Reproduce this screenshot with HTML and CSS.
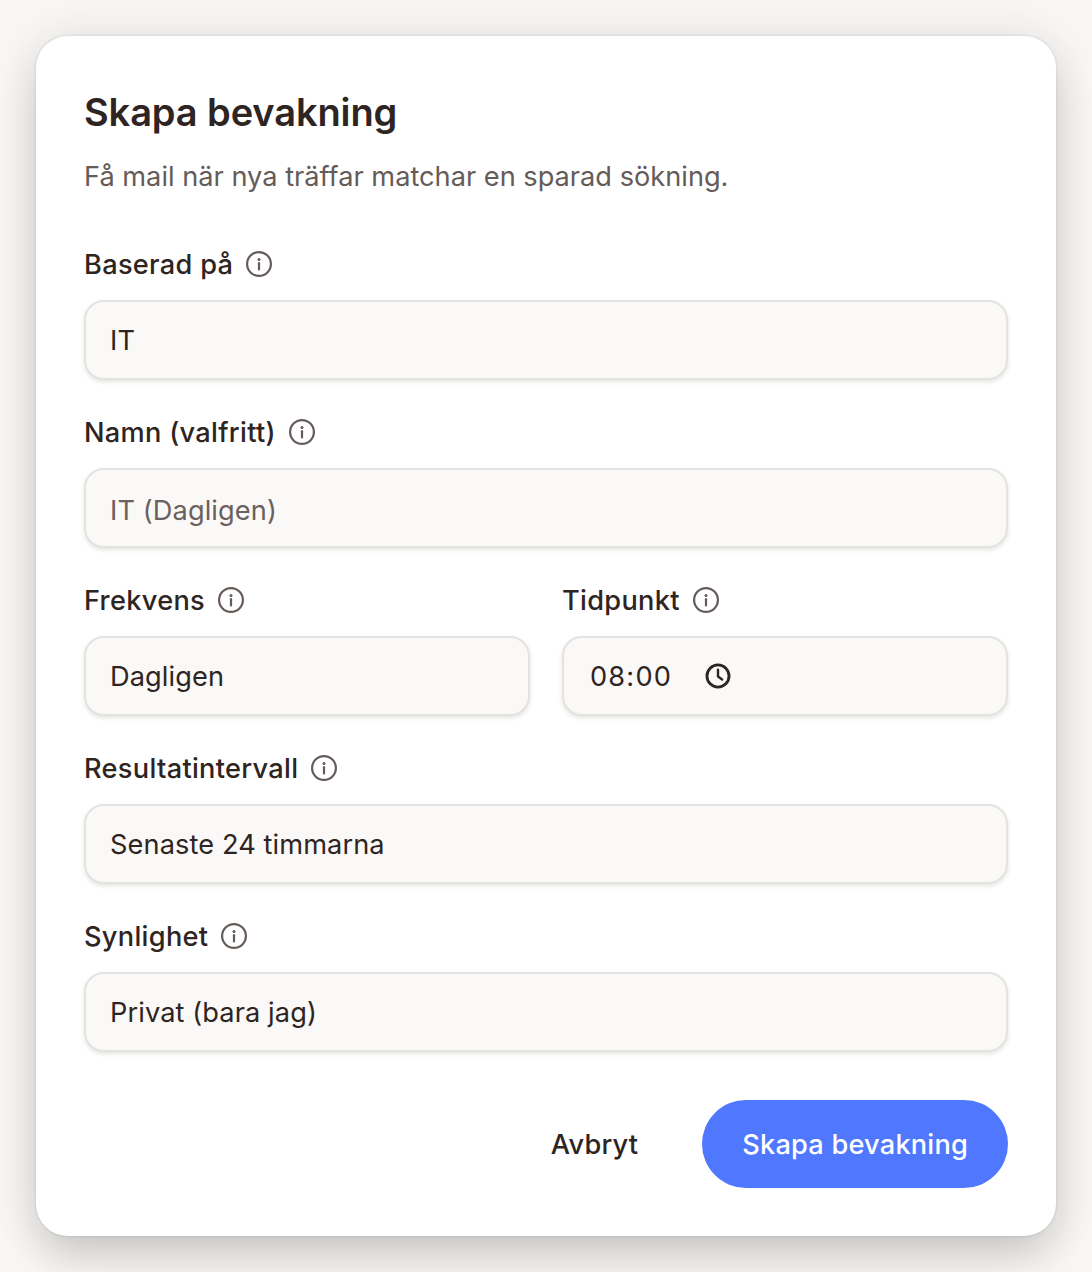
FILE: index.html
```html
<!DOCTYPE html>
<html lang="sv">
<head>
<meta charset="utf-8">
<title>Skapa bevakning</title>
<link rel="stylesheet" href="styles.css">
</head>
<body>
<svg class="defs" width="0" height="0" aria-hidden="true">
  <symbol id="info" viewBox="0 0 26 26">
    <circle cx="13" cy="13" r="11.9" fill="none" stroke="currentColor" stroke-width="2.2"/>
    <circle cx="13" cy="8.4" r="1.5" fill="currentColor"/>
    <path d="M13 12.2v6.2" fill="none" stroke="currentColor" stroke-width="2.2" stroke-linecap="round"/>
  </symbol>
</svg>
<main class="card">
  <h1 class="title">Skapa bevakning</h1>
  <p class="subtitle">Få mail när nya träffar matchar en sparad sökning.</p>
  <div class="field">
    <div class="label">Baserad på <svg class="info"><use href="#info"/></svg></div>
    <div class="input">IT</div>
  </div>
  <div class="field">
    <div class="label">Namn (valfritt) <svg class="info"><use href="#info"/></svg></div>
    <div class="input placeholder">IT (Dagligen)</div>
  </div>
  <div class="row">
    <div class="field">
      <div class="label">Frekvens <svg class="info"><use href="#info"/></svg></div>
      <div class="input">Dagligen</div>
    </div>
    <div class="field">
      <div class="label">Tidpunkt <svg class="info"><use href="#info"/></svg></div>
      <div class="input time">08:00
        <svg class="clock" viewBox="0 0 24 24"><circle cx="12" cy="12" r="10.2" fill="none" stroke="currentColor" stroke-width="2.6"/><path d="M12 6.2V12.4l3.8 2.8" fill="none" stroke="currentColor" stroke-width="2.2" stroke-linecap="round" stroke-linejoin="round"/></svg>
      </div>
    </div>
  </div>
  <div class="field">
    <div class="label">Resultatintervall <svg class="info"><use href="#info"/></svg></div>
    <div class="input">Senaste 24 timmarna</div>
  </div>
  <div class="field">
    <div class="label">Synlighet <svg class="info"><use href="#info"/></svg></div>
    <div class="input">Privat (bara jag)</div>
  </div>
  <div class="actions">
    <button class="btn-text" type="button">Avbryt</button>
    <button class="btn-primary" type="button">Skapa bevakning</button>
  </div>
</main>
</body>
</html>
```
FILE: styles.css
```css
* { box-sizing: border-box; }
html, body { margin: 0; height: 1272px; overflow: hidden; }
body {
  background: #f8f7f6;
  font-family: Inter, "Liberation Sans", sans-serif;
  color: #2e2422;
  padding: 36px;
}
.defs { position: absolute; }
.card {
  width: 1020px;
  height: 1200px;
  background: #fff;
  border-radius: 32px;
  padding: 52px 48px 48px;
  box-shadow: 0 0 0 1.5px rgba(40, 30, 25, .05), 0 24px 44px -6px rgba(40, 35, 30, .2), 0 0 48px rgba(40, 35, 30, .1);
}
.title {
  margin: 0;
  font-size: 38px;
  line-height: 48px;
  font-weight: 600;
  letter-spacing: -0.1px;
}
.subtitle {
  margin: 21px 0 0;
  font-size: 27.2px;
  line-height: 40px;
  color: #655b58;
}
.field { margin-top: 32px; flex: 1; min-width: 0; }
.subtitle + .field { margin-top: 47px; }
.row { display: flex; gap: 32px; }
.label {
  display: flex;
  align-items: center;
  gap: 13px;
  height: 40px;
  margin-bottom: 16px;
  font-size: 27.2px;
  font-weight: 450;
  letter-spacing: 0.3px;
}
.info { width: 26px; height: 26px; color: #655b58; flex: none; }
.input {
  display: flex;
  align-items: center;
  height: 80px;
  padding: 0 24px;
  background: #faf9f7;
  border: 2px solid #e5e3e0;
  border-radius: 20px;
  box-shadow: 0 2px 4px rgba(40, 30, 25, .12);
  font-size: 27.2px;
  letter-spacing: 0.1px;
}
.placeholder { color: #6a605d; padding-top: 4px; }
.time { letter-spacing: 1.2px; gap: 33px; padding-left: 26px; }
.clock { width: 26px; height: 26px; color: #2e2422; flex: none; }
.actions {
  display: flex;
  justify-content: flex-end;
  align-items: center;
  gap: 24px;
  margin-top: 48px;
}
.btn-text, .btn-primary {
  font: inherit;
  font-size: 27.2px;
  font-weight: 450;
  letter-spacing: 0.2px;
  border: 0;
  height: 88px;
  border-radius: 44px;
  padding: 0 40px;
}
.btn-text { background: none; color: #2e2422; }
.btn-primary { background: #5078ff; color: #fff; }
```
